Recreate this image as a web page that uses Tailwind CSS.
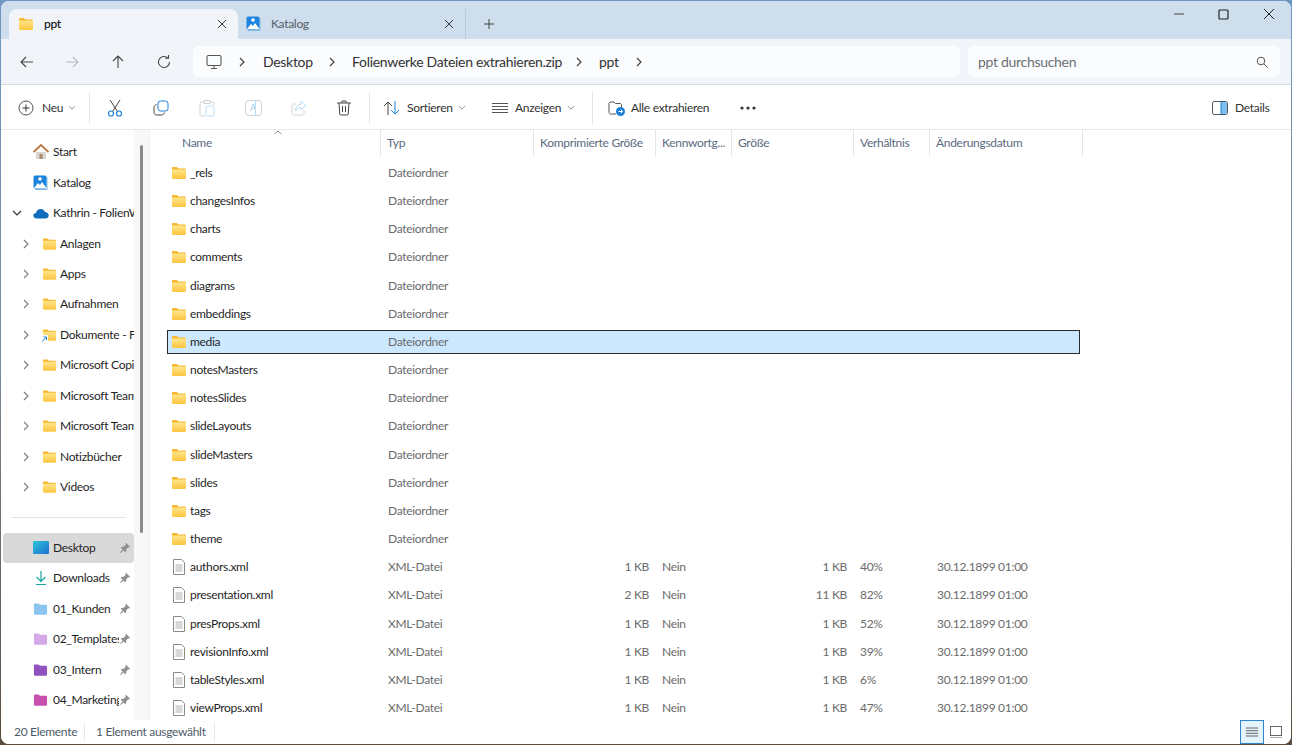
<!DOCTYPE html>
<html lang="de"><head><meta charset="utf-8"><title>ppt</title>
<script src="https://cdn.jsdelivr.net/npm/@tailwindcss/browser@4"></script></head>
<body class="w-[1292px] h-[745px] overflow-hidden bg-gradient-to-b from-[#6f97c4] via-[#7a8a98] to-[#5b4c3e] font-['Lato','Roboto',sans-serif] text-[12px] tracking-[-0.3px] text-[#1f1f1f]">
<svg class="absolute w-0 h-0"><defs>
<linearGradient id="fg" x1="0" y1="0" x2="0" y2="1"><stop offset="0" stop-color="#ffe58a"/><stop offset="1" stop-color="#fcc53f"/></linearGradient>
<symbol id="folder" viewBox="0 0 16 14"><path d="M1 2.200C1 1.500 1.500 1 2.200 1h3.600l1.700 1.500h6.300c.7 0 1.200.5 1.200 1.200V4H1z" fill="#f6b72c"/><path d="M1 3.600h14v8.200c0 .7-.5 1.200-1.200 1.200H2.200C1.500 13 1 12.500 1 11.800z" fill="url(#fg)"/></symbol>
<symbol id="doc" viewBox="0 0 14 16"><path d="M1.500.5h8l3 3v12h-11z" fill="#fff" stroke="#8a8a8a"/><path d="M3.500 6h7M3.500 8h7M3.500 10h7M3.500 12h7" stroke="#b0b0b0"/></symbol>
<symbol id="pin" viewBox="0 0 12 12"><path d="M7 .8l4.200 4.200-1 .6-.9-.3-2 2-.2 2.300-.8.600-1.700-1.800L1.500 11 1 10.500l2.600-3.100-1.800-1.700.6-.8 2.300-.2 2-2-.3-.9z" fill="#8f8f8f"/></symbol>
<symbol id="chevr" viewBox="0 0 8 12"><path d="M2 2l4 4-4 4" fill="none" stroke="currentColor" stroke-width="1.200"/></symbol>
<symbol id="chevd" viewBox="0 0 8 6"><path d="M1 1.200l3 3 3-3" fill="none" stroke="#8a8a8a"/></symbol>
<symbol id="gal" viewBox="0 0 16 16"><path d="M14 2v12.500H2" fill="none" stroke="#7fb8e8"/><rect x="0.500" y="0.500" width="13" height="13" rx="1.500" fill="#1c84dc"/><path d="M1 13l4-5 2 2 2-3 4.500 6z" fill="#fff"/><circle cx="7" cy="4" r="1.800" fill="#fff"/></symbol>
</defs></svg>

<div class="mt-px mx-px h-[743px] w-[1290px] rounded-lg overflow-hidden flex flex-col bg-white">
  <!-- title bar -->
  <div class="h-[38px] bg-[#cfdeec] flex items-end pl-2 shrink-0 relative">
    <div class="w-[229px] h-[30px] bg-[#f1f5f9] rounded-t-lg flex items-center pl-[9px] pr-[10px] gap-[10px] font-semibold">
      <svg class="w-4 h-[14px] shrink-0"><use href="#folder"/></svg><span class="flex-1">ppt</span>
      <svg class="w-3 h-3 shrink-0" viewBox="0 0 12 12"><path d="M2 2l8 8M10 2l-8 8" stroke="#333" fill="none"/></svg>
    </div>
    <div class="w-[228px] h-[30px] flex items-center pl-[8px] pr-[10px] gap-[10px] text-[#555d66] border-r border-[#bccbd9]">
      <svg class="w-4 h-4 shrink-0"><use href="#gal"/></svg><span class="flex-1 ml-[-1px]">Katalog</span>
      <svg class="w-3 h-3 shrink-0" viewBox="0 0 12 12"><path d="M2 2l8 8M10 2l-8 8" stroke="#333" fill="none"/></svg>
    </div>
    <div class="w-[46px] h-[30px] flex items-center justify-center">
      <svg class="w-3 h-3" viewBox="0 0 12 12"><path d="M6 1v10M1 6h10" stroke="#444" fill="none"/></svg>
    </div>
    <div class="flex-1"></div>
    <div class="self-start flex h-[26px] items-center">
      <div class="w-[45px] flex justify-center"><svg class="w-[10px] h-[10px]" viewBox="0 0 10 10"><path d="M0 5h10" stroke="#444" fill="none"/></svg></div>
      <div class="w-[45px] flex justify-center"><svg class="w-[11px] h-[11px]" viewBox="0 0 11 11"><rect x="1" y="1" width="9" height="9" rx="1" stroke="#222" stroke-width="1.200" fill="none"/></svg></div>
      <div class="w-[45px] flex justify-center"><svg class="w-3 h-3" viewBox="0 0 12 12"><path d="M1 1l10 10M11 1L1 11" stroke="#222" fill="none"/></svg></div>
    </div>
  </div>
  <!-- address bar -->
  <div class="h-[46px] bg-[#f1f5f9] border-b border-[#d5dbe2] flex items-center pl-[3px] pr-[11px] shrink-0">
    <div class="w-[46px] flex justify-center"><svg class="w-4 h-4" viewBox="0 0 16 16"><path d="M14 8H2M7 3L2 8l5 5" fill="none" stroke="#444" stroke-width="1.100"/></svg></div>
    <div class="w-[46px] flex justify-center -ml-px"><svg class="w-4 h-4" viewBox="0 0 16 16"><path d="M2 8h12M9 3l5 5-5 5" fill="none" stroke="#b8bcc0" stroke-width="1.100"/></svg></div>
    <div class="w-[46px] flex justify-center"><svg class="w-4 h-4" viewBox="0 0 16 16"><path d="M8 14V2M3 7l5-5 5 5" fill="none" stroke="#444" stroke-width="1.100"/></svg></div>
    <div class="w-[46px] flex justify-center"><svg class="w-4 h-4" viewBox="0 0 16 16"><path d="M13.500 8a5.500 5.500 0 1 1-1.700-4M12.500 1v3.300H9.200" fill="none" stroke="#444" stroke-width="1.100"/></svg></div>
    <div class="ml-[6px] w-[767px] h-[31px] rounded-md bg-[#fafcfe] flex items-center text-[14px] text-[#333]">
      <svg class="ml-[13px] w-[16px] h-[16px] shrink-0" viewBox="0 0 16 16"><rect x="1" y="1.500" width="14" height="10" rx="1.500" fill="none" stroke="#555" stroke-width="1.100"/><path d="M5 14.500h6M8 11.500v3" stroke="#555" fill="none"/></svg>
      <svg class="ml-[16px] w-2 h-3 text-[#444] shrink-0"><use href="#chevr"/></svg><span class="ml-[17px] w-[49px]">Desktop</span>
      <svg class="ml-[16px] w-2 h-3 text-[#444] shrink-0"><use href="#chevr"/></svg><span class="ml-[16px] w-[209px] whitespace-nowrap">Folienwerke Dateien extrahieren.zip</span>
      <svg class="ml-[14px] w-2 h-3 text-[#444] shrink-0"><use href="#chevr"/></svg><span class="ml-[16px] w-[21px]">ppt</span>
      <svg class="ml-[15px] w-2 h-3 text-[#444] shrink-0"><use href="#chevr"/></svg>
    </div>
    <div class="ml-2 flex-1 h-[31px] rounded-md bg-[#fafcfe] flex items-center pl-[10px] pr-[12px] text-[14px] text-[#6b6f73]">
      <span class="flex-1">ppt durchsuchen</span>
      <svg class="w-3 h-3 shrink-0" viewBox="0 0 12 12"><circle cx="5" cy="5" r="3.800" fill="none" stroke="#555"/><path d="M8 8l3.500 3.500" stroke="#555" fill="none"/></svg>
    </div>
  </div>
  <!-- toolbar -->
  <div class="h-[45px] bg-white border-b border-[#e8e8e8] flex items-center shrink-0 text-[#333] pt-[1px]">
    <div class="w-[89px] flex items-center h-8 border-r border-[#e4e4e4]">
      <svg class="ml-[17px] w-4 h-4 shrink-0" viewBox="0 0 16 16"><circle cx="8" cy="8" r="7" fill="none" stroke="#555"/><path d="M8 4.500v7M4.500 8h7" stroke="#333" fill="none"/></svg>
      <span class="ml-2 w-[22px]">Neu</span><svg class="ml-[4px] w-2 h-[6px] shrink-0"><use href="#chevd"/></svg>
    </div>
    <div class="w-[2px]"></div>
    <div class="w-[46px] flex justify-center"><svg class="w-4 h-[18px]" viewBox="0 0 16 18"><path d="M3 1l7.500 11.500M13 1L5.500 12.500" stroke="#444" fill="none"/><circle cx="4" cy="14.500" r="2.500" fill="none" stroke="#1b7fd6" stroke-width="1.200"/><circle cx="12" cy="14.500" r="2.500" fill="none" stroke="#1b7fd6" stroke-width="1.200"/></svg></div>
    <div class="w-[46px] flex justify-center"><svg class="w-4 h-4" viewBox="0 0 16 16"><rect x="5" y="1" width="10" height="10" rx="2.500" fill="#fff" stroke="#1b7fd6"/><path d="M3.500 4.500C2 5 1 6 1 7.500v5C1 14 2 15 3.500 15h5c1.500 0 2.500-1 3-2.500" fill="none" stroke="#444"/></svg></div>
    <div class="w-[46px] flex justify-center"><svg class="w-4 h-[18px]" viewBox="0 0 16 18"><path d="M5 3H2.500C1.700 3 1 3.700 1 4.500v11c0 .8.700 1.500 1.500 1.500H6M11 3h2.500c.8 0 1.500.7 1.500 1.500V6M5 1.500h6v3H5z" fill="none" stroke="#cfcfcf"/><rect x="7" y="7" width="8" height="10" rx="1.500" fill="none" stroke="#b8dcf5"/></svg></div>
    <div class="w-[46px] flex justify-center"><div class="relative w-[17px] h-[16px] border border-[#d2d2d2] rounded-sm flex items-center justify-center text-[9px] leading-none text-[#9dc8ea]">A<span class="absolute left-[9px] -top-px -bottom-px w-px bg-[#b8dcf5]"></span></div></div>
    <div class="w-[45px] flex justify-center"><svg class="w-4 h-4" viewBox="0 0 16 16"><path d="M13 10v3.500c0 .8-.7 1.500-1.500 1.500h-9C1.700 15 1 14.300 1 13.500v-8C1 4.700 1.700 4 2.500 4H5" fill="none" stroke="#d2d2d2"/><path d="M10 1l5 4.500L10 10V7.500C7.500 7.500 5.500 8.500 4.500 11c0-4 2-6.500 5.500-7z" fill="none" stroke="#b8dcf5"/></svg></div>
    <div class="w-[46px] flex justify-center"><svg class="w-[14px] h-4" viewBox="0 0 14 16"><path d="M0 3h14M5 3V1h4v2M2 3l.8 11c0 .6.500 1 1 1h6.400c.5 0 1-.4 1-1L12 3M5.500 6v6M8.500 6v6" fill="none" stroke="#444"/></svg></div>
    <div class="w-px h-8 bg-[#e4e4e4] ml-[2px]"></div>
    <svg class="ml-[13px] w-[17px] h-4 shrink-0" viewBox="0 0 17 16"><path d="M5 15V2M1 6l4-4 4 4" fill="none" stroke="#444"/><path d="M12 1v13M8 10l4 4 4-4" fill="none" stroke="#1b7fd6"/></svg>
    <span class="ml-[7px] w-[46px] whitespace-nowrap">Sortieren</span><svg class="ml-[5px] w-2 h-[6px] shrink-0"><use href="#chevd"/></svg>
    <svg class="ml-[26px] w-[16px] h-3 shrink-0" viewBox="0 0 16 12"><path d="M0 1.500h16M0 4.500h16M0 7.500h16M0 10.500h16" stroke="#555" fill="none"/></svg>
    <span class="ml-[7px] w-[47px] whitespace-nowrap">Anzeigen</span><svg class="ml-[5px] w-2 h-[6px] shrink-0"><use href="#chevd"/></svg>
    <div class="w-px h-8 bg-[#e4e4e4] ml-[17px]"></div>
    <svg class="ml-[15px] w-[17px] h-[17px] shrink-0" viewBox="0 0 17 17"><path d="M1 4.500C1 3.700 1.700 3 2.500 3H6l1.500 1.500H12c.8 0 1.500.7 1.500 1.500v2M1 4.500v9c0 .8.700 1.500 1.500 1.500H8" fill="none" stroke="#555"/><circle cx="12.500" cy="12.500" r="4.500" fill="#1b7fd6"/><path d="M10.500 12.500h4M12.700 10.700l1.800 1.800-1.800 1.800" stroke="#fff" fill="none"/></svg>
    <span class="ml-[6px] w-[79px] whitespace-nowrap">Alle extrahieren</span>
    <svg class="ml-[30px] w-4 h-1 shrink-0" viewBox="0 0 16 4"><circle cx="2" cy="2" r="1.600" fill="#333"/><circle cx="8" cy="2" r="1.600" fill="#333"/><circle cx="14" cy="2" r="1.600" fill="#333"/></svg>
    <div class="flex-1"></div>
    <svg class="w-4 h-[14px] shrink-0" viewBox="0 0 16 14"><rect x="0.500" y="0.500" width="15" height="13" rx="2" fill="#fff" stroke="#555"/><rect x="9" y="1" width="6" height="12" fill="#7cc0ef"/><path d="M9 .5v13" stroke="#1b7fd6"/></svg>
    <span class="ml-[7px] mr-[21px] w-[35px]">Details</span>
  </div>
  <!-- main -->
  <div class="flex-1 flex min-h-0">
    <!-- sidebar -->
    <div class="w-[133px] shrink-0 overflow-hidden pt-[7px] relative">
      <div class="h-[30.450px] flex items-center pl-[32px]"><svg class="w-[16px] h-[16px] shrink-0" viewBox="0 0 16 16"><path d="M3 8v7h10V8" fill="#d9d5cf"/><rect x="6.500" y="10" width="3" height="5" fill="#a98a68"/><path d="M0.500 8L8 1l7.500 7" fill="none" stroke="#b9763c" stroke-width="1.800"/></svg><span class="ml-[4px]">Start</span></div>
      <div class="h-[30.450px] flex items-center pl-[32px]"><svg class="w-4 h-4 shrink-0"><use href="#gal"/></svg><span class="ml-[4px]">Katalog</span></div>
      <div class="h-[30.450px] flex items-center pl-[11px] whitespace-nowrap"><svg class="w-[10px] h-[7px] shrink-0" viewBox="0 0 10 7"><path d="M1 1l4 4 4-4" fill="none" stroke="#333" stroke-width="1.200"/></svg><svg class="ml-[11px] w-4 h-[11px] shrink-0" viewBox="0 0 16 11"><path d="M4 10.500C1.500 10.500.3 9 .3 7.500 .3 6 1.500 5 3 5c.5-2.500 2.500-4 4.700-4C9.800 1 11.300 2.200 12 4c2 0 3.700 1.300 3.700 3.200 0 2-1.500 3.300-3.500 3.300z" fill="#0f6cbd"/></svg><span class="ml-[4px]">Kathrin - FolienWerke</span></div>
      <div class="h-[30.450px] flex items-center pl-[21px]"><svg class="w-2 h-3 text-[#808080] shrink-0"><use href="#chevr"/></svg><svg class="ml-[12px] w-[15px] h-[14px] shrink-0"><use href="#folder"/></svg><span class="ml-[3px]">Anlagen</span></div>
      <div class="h-[30.450px] flex items-center pl-[21px]"><svg class="w-2 h-3 text-[#808080] shrink-0"><use href="#chevr"/></svg><svg class="ml-[12px] w-[15px] h-[14px] shrink-0"><use href="#folder"/></svg><span class="ml-[3px]">Apps</span></div>
      <div class="h-[30.450px] flex items-center pl-[21px]"><svg class="w-2 h-3 text-[#808080] shrink-0"><use href="#chevr"/></svg><svg class="ml-[12px] w-[15px] h-[14px] shrink-0"><use href="#folder"/></svg><span class="ml-[3px]">Aufnahmen</span></div>
      <div class="h-[30.450px] flex items-center pl-[21px] whitespace-nowrap"><svg class="w-2 h-3 text-[#808080] shrink-0"><use href="#chevr"/></svg><span class="relative ml-[12px] w-[15px] h-[14px] shrink-0"><svg class="w-[15px] h-[14px]"><use href="#folder"/></svg><svg class="absolute -left-[2px] top-[7px] w-2 h-2" viewBox="0 0 8 8"><rect width="8" height="8" fill="#fff"/><path d="M2 6.500L6 2.500M3.500 2h3v3" stroke="#1b7fd6" fill="none"/></svg></span><span class="ml-[3px]">Dokumente - FolienWerke</span></div>
      <div class="h-[30.450px] flex items-center pl-[21px] whitespace-nowrap"><svg class="w-2 h-3 text-[#808080] shrink-0"><use href="#chevr"/></svg><svg class="ml-[12px] w-[15px] h-[14px] shrink-0"><use href="#folder"/></svg><span class="ml-[3px]">Microsoft Copilot</span></div>
      <div class="h-[30.450px] flex items-center pl-[21px] whitespace-nowrap"><svg class="w-2 h-3 text-[#808080] shrink-0"><use href="#chevr"/></svg><svg class="ml-[12px] w-[15px] h-[14px] shrink-0"><use href="#folder"/></svg><span class="ml-[3px]">Microsoft Teams</span></div>
      <div class="h-[30.450px] flex items-center pl-[21px] whitespace-nowrap"><svg class="w-2 h-3 text-[#808080] shrink-0"><use href="#chevr"/></svg><svg class="ml-[12px] w-[15px] h-[14px] shrink-0"><use href="#folder"/></svg><span class="ml-[3px]">Microsoft Teams</span></div>
      <div class="h-[30.450px] flex items-center pl-[21px]"><svg class="w-2 h-3 text-[#808080] shrink-0"><use href="#chevr"/></svg><svg class="ml-[12px] w-[15px] h-[14px] shrink-0"><use href="#folder"/></svg><span class="ml-[3px]">Notizbücher</span></div>
      <div class="h-[30.450px] flex items-center pl-[21px]"><svg class="w-2 h-3 text-[#808080] shrink-0"><use href="#chevr"/></svg><svg class="ml-[12px] w-[15px] h-[14px] shrink-0"><use href="#folder"/></svg><span class="ml-[3px]">Videos</span></div>
      <div class="h-[30.450px] flex items-center pl-[10px] pr-[8px]"><div class="w-full h-px bg-[#e2e2e2]"></div></div>
      <div class="h-[30.450px] ml-[2px] bg-[#d9d9d9] rounded flex items-center pl-[30px] pr-[3px] whitespace-nowrap"><svg class="w-4 h-[13px] shrink-0" viewBox="0 0 16 13"><defs><linearGradient id="dk" x1="0" y1="0" x2="1" y2="1"><stop offset="0" stop-color="#2fc4d8"/><stop offset="1" stop-color="#1b6fd0"/></linearGradient></defs><rect width="16" height="13" rx="1" fill="url(#dk)"/></svg><span class="ml-[4px] flex-1">Desktop</span><svg class="w-3 h-3 shrink-0"><use href="#pin"/></svg></div>
      <div class="h-[30.450px] flex items-center pl-[32px] pr-[3px] whitespace-nowrap"><svg class="w-4 h-4 shrink-0" viewBox="0 0 16 16"><path d="M8 1v10M3.500 7L8 11.500 12.500 7M3 14.500h10" fill="none" stroke="#14a79a" stroke-width="1.200"/></svg><span class="ml-[4px] flex-1">Downloads</span><svg class="w-3 h-3 shrink-0"><use href="#pin"/></svg></div>
      <div class="h-[30.450px] flex items-center pl-[32px] pr-[3px] whitespace-nowrap"><svg class="w-[15px] h-[14px] shrink-0" viewBox="0 0 16 14"><path d="M1 2.200C1 1.500 1.500 1 2.200 1h3.600l1.700 1.500h6.300c.7 0 1.200.5 1.200 1.200V12c0 .6-.5 1-1.200 1H2.200C1.500 13 1 12.600 1 12z" fill="#8cc4f0"/></svg><span class="ml-[5px] flex-1">01_Kunden</span><svg class="w-3 h-3 shrink-0"><use href="#pin"/></svg></div>
      <div class="h-[30.450px] flex items-center pl-[32px] pr-[3px] whitespace-nowrap"><svg class="w-[15px] h-[14px] shrink-0" viewBox="0 0 16 14"><path d="M1 2.200C1 1.500 1.500 1 2.200 1h3.600l1.700 1.500h6.300c.7 0 1.200.5 1.200 1.200V12c0 .6-.5 1-1.200 1H2.200C1.500 13 1 12.600 1 12z" fill="#d3a9ea"/></svg><span class="ml-[5px] w-[66px] overflow-hidden shrink-0">02_Templates</span><svg class="w-3 h-3 shrink-0"><use href="#pin"/></svg></div>
      <div class="h-[30.450px] flex items-center pl-[32px] pr-[3px] whitespace-nowrap"><svg class="w-[15px] h-[14px] shrink-0" viewBox="0 0 16 14"><path d="M1 2.200C1 1.500 1.500 1 2.200 1h3.600l1.700 1.500h6.300c.7 0 1.200.5 1.200 1.200V12c0 .6-.5 1-1.200 1H2.200C1.500 13 1 12.600 1 12z" fill="#8f52bf"/></svg><span class="ml-[5px] flex-1">03_Intern</span><svg class="w-3 h-3 shrink-0"><use href="#pin"/></svg></div>
      <div class="h-[30.450px] flex items-center pl-[32px] pr-[3px] whitespace-nowrap"><svg class="w-[15px] h-[14px] shrink-0" viewBox="0 0 16 14"><path d="M1 2.200C1 1.500 1.500 1 2.200 1h3.600l1.700 1.500h6.300c.7 0 1.200.5 1.200 1.200V12c0 .6-.5 1-1.200 1H2.200C1.500 13 1 12.600 1 12z" fill="#c74fae"/></svg><span class="ml-[5px] w-[66px] overflow-hidden shrink-0">04_Marketing</span><svg class="w-3 h-3 shrink-0"><use href="#pin"/></svg></div>
    </div>
    <!-- scrollbar -->
    <div class="w-[16px] shrink-0 bg-[#f8f8f8] border-r border-[#eeeeee] pt-[15px] flex justify-center">
      <div class="w-[3px] h-[388px] rounded-full bg-[#8a8a8a]"></div>
    </div>
    <!-- list -->
    <div class="flex-1 min-w-0 pl-[17px]">
      <div class="relative h-[26px] grid grid-cols-[214px_153px_122px_76px_122px_76px_153px] w-[916px] items-center text-[#5a6a7e]">
        <svg class="absolute left-[107px] top-0 w-[8px] h-[5px]" viewBox="0 0 8 5"><path d="M.5 4L4 1l3.500 3" fill="none" stroke="#888"/></svg>
        <div class="h-full flex items-center pl-[15px] border-r border-[#e5e5e5]">Name</div>
        <div class="h-full flex items-center pl-[6px] border-r border-[#e5e5e5]">Typ</div>
        <div class="h-full flex items-center pl-[6px] border-r border-[#e5e5e5] whitespace-nowrap">Komprimierte Größe</div>
        <div class="h-full flex items-center pl-[6px] border-r border-[#e5e5e5] whitespace-nowrap">Kennwortg...</div>
        <div class="h-full flex items-center pl-[6px] border-r border-[#e5e5e5]">Größe</div>
        <div class="h-full flex items-center pl-[6px] border-r border-[#e5e5e5]">Verhältnis</div>
        <div class="h-full flex items-center pl-[6px] border-r border-[#e5e5e5]">Änderungsdatum</div>
      </div>
      <div class="flex flex-col gap-[4.160px] pt-[5px] text-[#6b6b6b]">
        <div class="h-6 w-[913px] flex items-center pl-[4px]"><svg class="w-4 h-[14px] shrink-0"><use href="#folder"/></svg><span class="ml-[3px] w-[191px] text-[#1f1f1f]">_rels</span><span class="ml-[7px]">Dateiordner</span></div>
        <div class="h-6 w-[913px] flex items-center pl-[4px]"><svg class="w-4 h-[14px] shrink-0"><use href="#folder"/></svg><span class="ml-[3px] w-[191px] text-[#1f1f1f]">changesInfos</span><span class="ml-[7px]">Dateiordner</span></div>
        <div class="h-6 w-[913px] flex items-center pl-[4px]"><svg class="w-4 h-[14px] shrink-0"><use href="#folder"/></svg><span class="ml-[3px] w-[191px] text-[#1f1f1f]">charts</span><span class="ml-[7px]">Dateiordner</span></div>
        <div class="h-6 w-[913px] flex items-center pl-[4px]"><svg class="w-4 h-[14px] shrink-0"><use href="#folder"/></svg><span class="ml-[3px] w-[191px] text-[#1f1f1f]">comments</span><span class="ml-[7px]">Dateiordner</span></div>
        <div class="h-6 w-[913px] flex items-center pl-[4px]"><svg class="w-4 h-[14px] shrink-0"><use href="#folder"/></svg><span class="ml-[3px] w-[191px] text-[#1f1f1f]">diagrams</span><span class="ml-[7px]">Dateiordner</span></div>
        <div class="h-6 w-[913px] flex items-center pl-[4px]"><svg class="w-4 h-[14px] shrink-0"><use href="#folder"/></svg><span class="ml-[3px] w-[191px] text-[#1f1f1f]">embeddings</span><span class="ml-[7px]">Dateiordner</span></div>
        <div class="h-6 w-[913px] flex items-center pl-[3px] bg-[#cce8ff] border border-[#2b2b2b]"><svg class="w-4 h-[14px] shrink-0"><use href="#folder"/></svg><span class="ml-[3px] w-[191px] text-[#1f1f1f]">media</span><span class="ml-[7px]">Dateiordner</span></div>
        <div class="h-6 w-[913px] flex items-center pl-[4px]"><svg class="w-4 h-[14px] shrink-0"><use href="#folder"/></svg><span class="ml-[3px] w-[191px] text-[#1f1f1f]">notesMasters</span><span class="ml-[7px]">Dateiordner</span></div>
        <div class="h-6 w-[913px] flex items-center pl-[4px]"><svg class="w-4 h-[14px] shrink-0"><use href="#folder"/></svg><span class="ml-[3px] w-[191px] text-[#1f1f1f]">notesSlides</span><span class="ml-[7px]">Dateiordner</span></div>
        <div class="h-6 w-[913px] flex items-center pl-[4px]"><svg class="w-4 h-[14px] shrink-0"><use href="#folder"/></svg><span class="ml-[3px] w-[191px] text-[#1f1f1f]">slideLayouts</span><span class="ml-[7px]">Dateiordner</span></div>
        <div class="h-6 w-[913px] flex items-center pl-[4px]"><svg class="w-4 h-[14px] shrink-0"><use href="#folder"/></svg><span class="ml-[3px] w-[191px] text-[#1f1f1f]">slideMasters</span><span class="ml-[7px]">Dateiordner</span></div>
        <div class="h-6 w-[913px] flex items-center pl-[4px]"><svg class="w-4 h-[14px] shrink-0"><use href="#folder"/></svg><span class="ml-[3px] w-[191px] text-[#1f1f1f]">slides</span><span class="ml-[7px]">Dateiordner</span></div>
        <div class="h-6 w-[913px] flex items-center pl-[4px]"><svg class="w-4 h-[14px] shrink-0"><use href="#folder"/></svg><span class="ml-[3px] w-[191px] text-[#1f1f1f]">tags</span><span class="ml-[7px]">Dateiordner</span></div>
        <div class="h-6 w-[913px] flex items-center pl-[4px]"><svg class="w-4 h-[14px] shrink-0"><use href="#folder"/></svg><span class="ml-[3px] w-[191px] text-[#1f1f1f]">theme</span><span class="ml-[7px]">Dateiordner</span></div>
        <div class="h-6 w-[913px] grid grid-cols-[214px_153px_115px_83px_115px_83px_150px] items-center"><span class="pl-[5px] flex items-center text-[#1f1f1f]"><svg class="w-[14px] h-4 mr-[4px] shrink-0"><use href="#doc"/></svg>authors.xml</span><span class="pl-[7px]">XML-Datei</span><span class="text-right">1 KB</span><span class="pl-[13px]">Nein</span><span class="text-right">1 KB</span><span class="pl-[13px]">40%</span><span class="pl-[7px]">30.12.1899 01:00</span></div>
        <div class="h-6 w-[913px] grid grid-cols-[214px_153px_115px_83px_115px_83px_150px] items-center"><span class="pl-[5px] flex items-center text-[#1f1f1f]"><svg class="w-[14px] h-4 mr-[4px] shrink-0"><use href="#doc"/></svg>presentation.xml</span><span class="pl-[7px]">XML-Datei</span><span class="text-right">2 KB</span><span class="pl-[13px]">Nein</span><span class="text-right">11 KB</span><span class="pl-[13px]">82%</span><span class="pl-[7px]">30.12.1899 01:00</span></div>
        <div class="h-6 w-[913px] grid grid-cols-[214px_153px_115px_83px_115px_83px_150px] items-center"><span class="pl-[5px] flex items-center text-[#1f1f1f]"><svg class="w-[14px] h-4 mr-[4px] shrink-0"><use href="#doc"/></svg>presProps.xml</span><span class="pl-[7px]">XML-Datei</span><span class="text-right">1 KB</span><span class="pl-[13px]">Nein</span><span class="text-right">1 KB</span><span class="pl-[13px]">52%</span><span class="pl-[7px]">30.12.1899 01:00</span></div>
        <div class="h-6 w-[913px] grid grid-cols-[214px_153px_115px_83px_115px_83px_150px] items-center"><span class="pl-[5px] flex items-center text-[#1f1f1f]"><svg class="w-[14px] h-4 mr-[4px] shrink-0"><use href="#doc"/></svg>revisionInfo.xml</span><span class="pl-[7px]">XML-Datei</span><span class="text-right">1 KB</span><span class="pl-[13px]">Nein</span><span class="text-right">1 KB</span><span class="pl-[13px]">39%</span><span class="pl-[7px]">30.12.1899 01:00</span></div>
        <div class="h-6 w-[913px] grid grid-cols-[214px_153px_115px_83px_115px_83px_150px] items-center"><span class="pl-[5px] flex items-center text-[#1f1f1f]"><svg class="w-[14px] h-4 mr-[4px] shrink-0"><use href="#doc"/></svg>tableStyles.xml</span><span class="pl-[7px]">XML-Datei</span><span class="text-right">1 KB</span><span class="pl-[13px]">Nein</span><span class="text-right">1 KB</span><span class="pl-[13px]">6%</span><span class="pl-[7px]">30.12.1899 01:00</span></div>
        <div class="h-6 w-[913px] grid grid-cols-[214px_153px_115px_83px_115px_83px_150px] items-center"><span class="pl-[5px] flex items-center text-[#1f1f1f]"><svg class="w-[14px] h-4 mr-[4px] shrink-0"><use href="#doc"/></svg>viewProps.xml</span><span class="pl-[7px]">XML-Datei</span><span class="text-right">1 KB</span><span class="pl-[13px]">Nein</span><span class="text-right">1 KB</span><span class="pl-[13px]">47%</span><span class="pl-[7px]">30.12.1899 01:00</span></div>
      </div>
    </div>
  </div>
  <!-- status bar -->
  <div class="h-[24px] shrink-0 bg-white flex items-center text-[#4d5a68]">
    <span class="ml-[13px] w-[71px] border-r border-[#e8e8e8]">20 Elemente</span>
    <span class="ml-[11px] w-[119px] border-r border-[#e8e8e8] whitespace-nowrap">1 Element ausgewählt</span>
    <div class="flex-1"></div>
    <div class="w-[24px] h-[24px] bg-[#e5f3fb] border border-[#2b86d4] flex items-center justify-center"><svg class="w-[12px] h-[10px]" viewBox="0 0 12 10"><path d="M0 1h12M0 3.700h12M0 6.300h12M0 9h12" stroke="#666" fill="none"/></svg></div>
    <div class="w-[24px] flex justify-center mr-[3px]"><svg class="w-[12px] h-[12px]" viewBox="0 0 12 12"><rect x="0.500" y="0.500" width="11" height="9" fill="none" stroke="#666"/><path d="M0 11.500h12" stroke="#aaa" fill="none"/></svg></div>
  </div>
</div>
</body></html>
